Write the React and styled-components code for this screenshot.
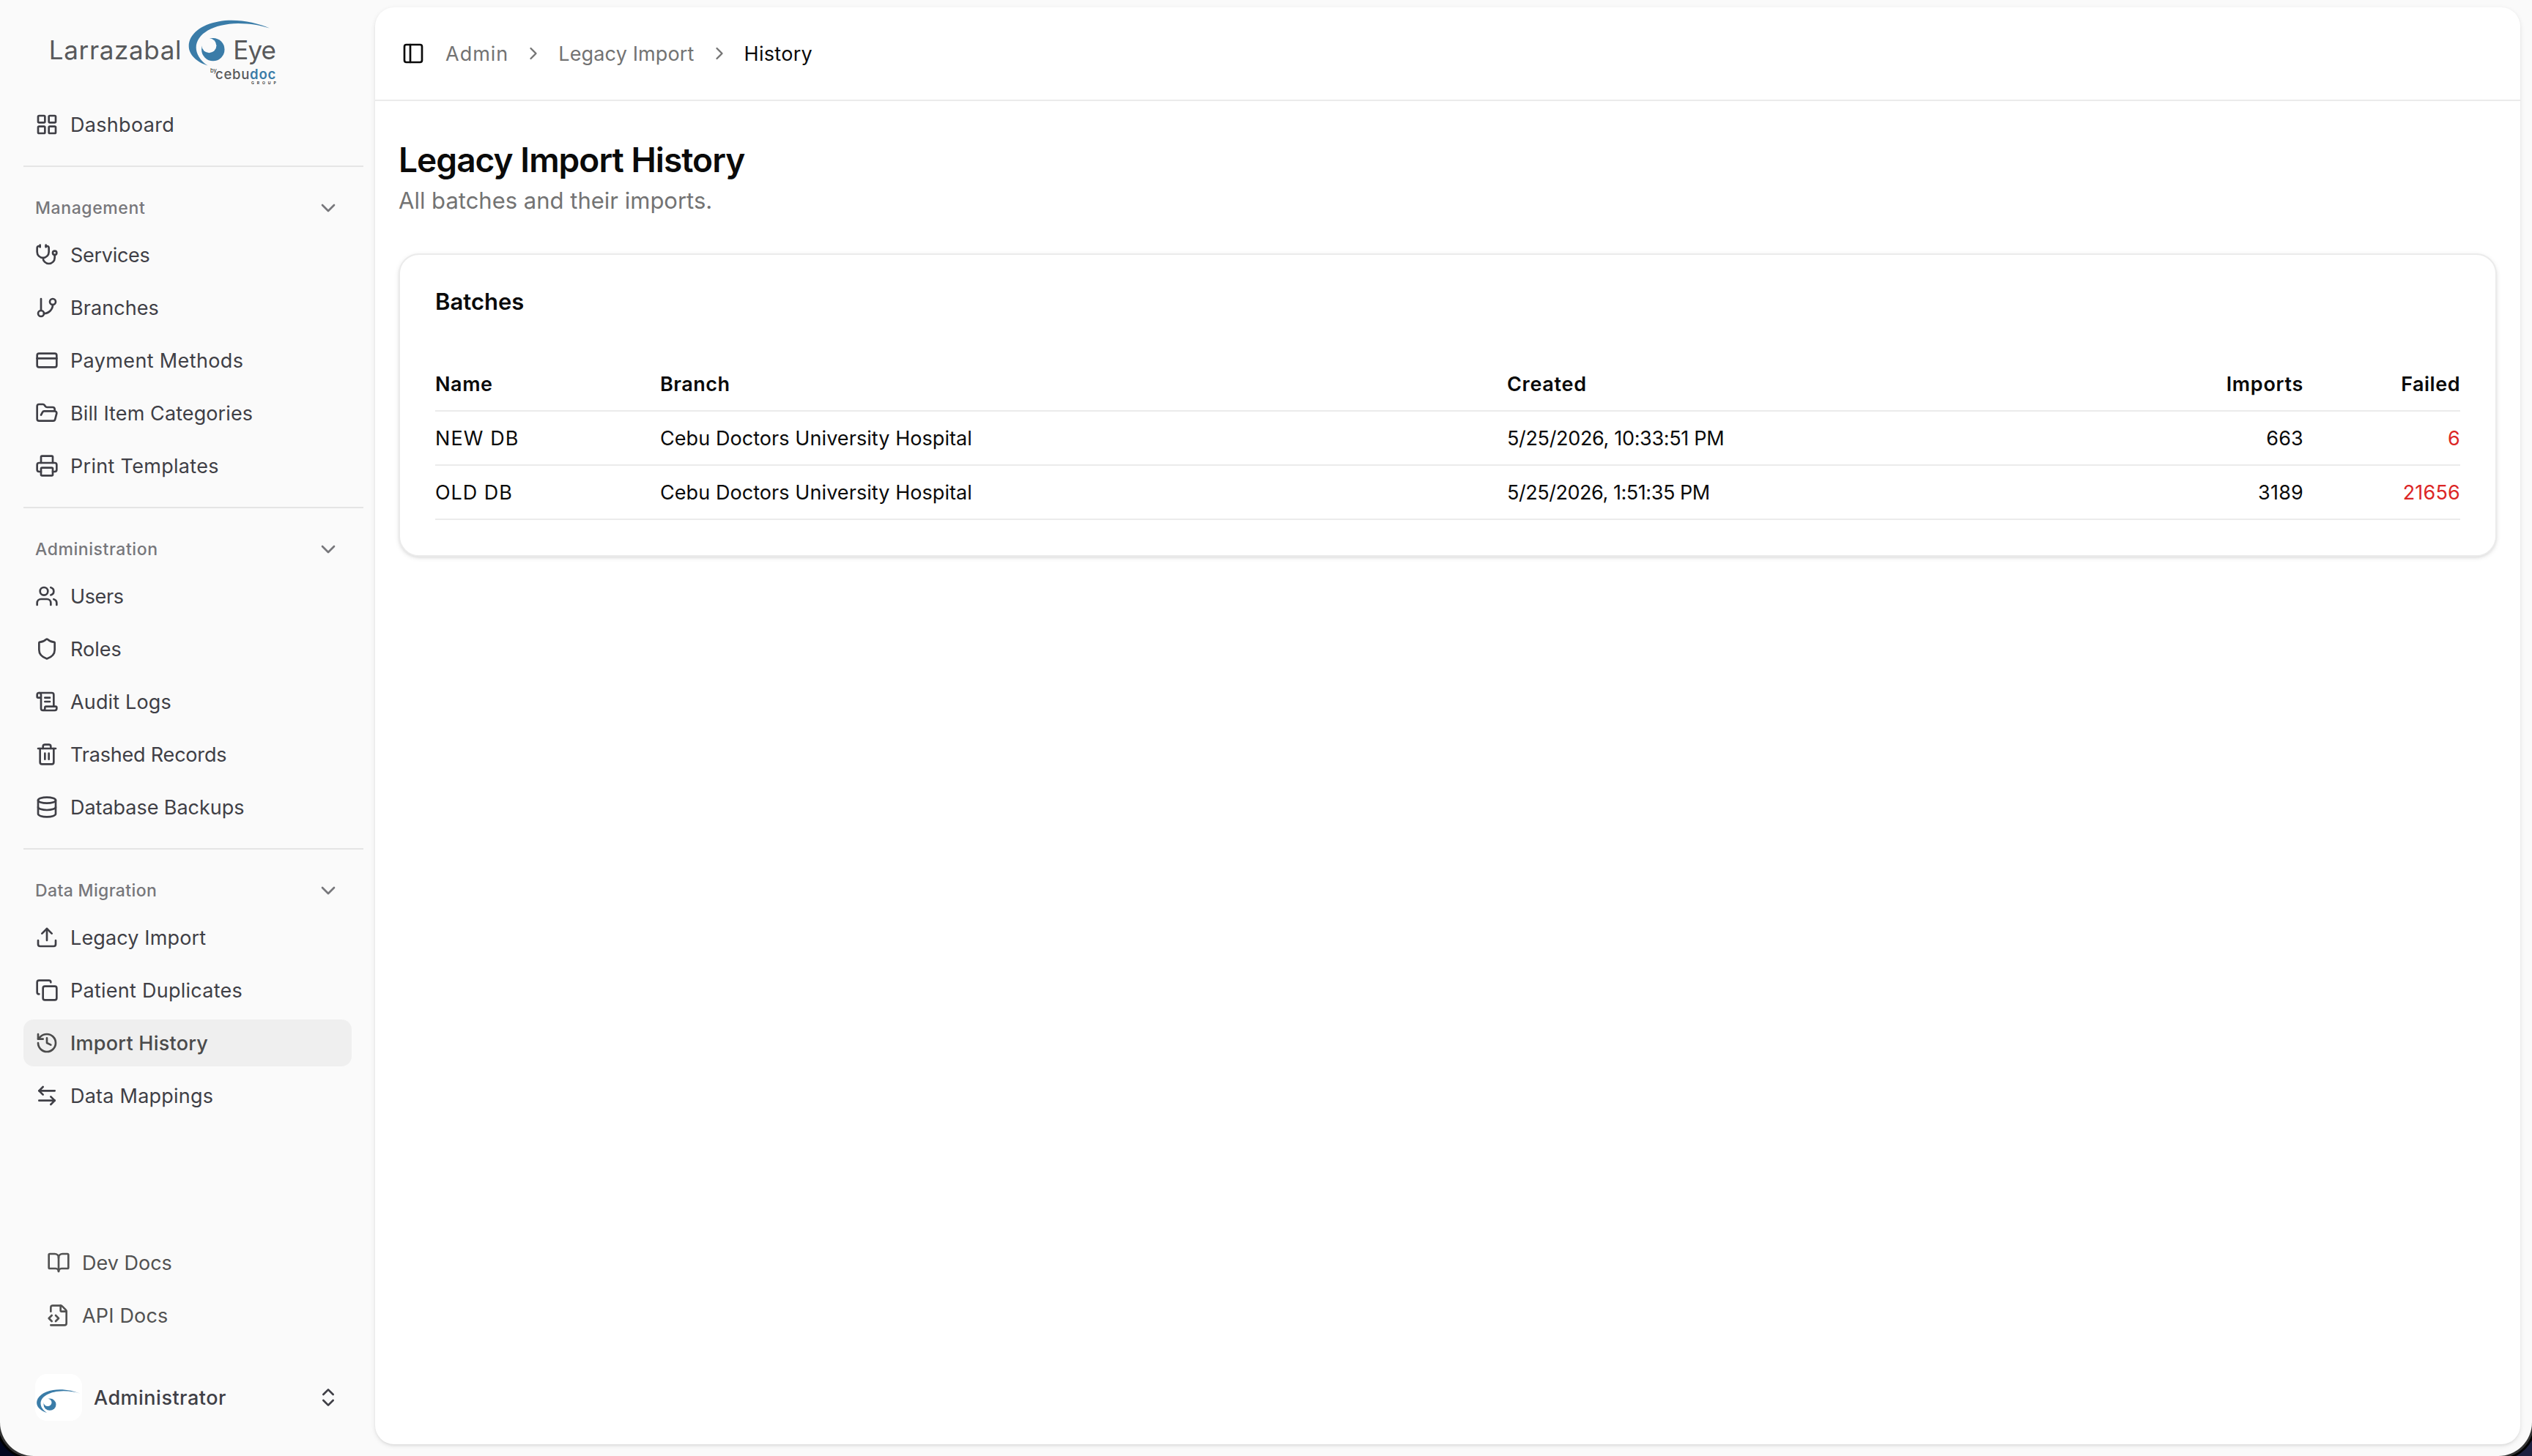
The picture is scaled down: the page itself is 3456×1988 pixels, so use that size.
import React from "react";
import styled, { createGlobalStyle } from "styled-components";
import {
  ArrowLeftRight,
  BookOpen,
  ChevronDown,
  ChevronRight,
  ChevronsUpDown,
  Copy,
  CreditCard,
  Database,
  FolderOpen,
  History,
  LayoutGrid,
  PanelLeft,
  Printer,
  ScrollText,
  Shield,
  Stethoscope,
  Trash2,
  Upload,
  Users,
} from "lucide-react";

const color = {
  canvas: "#fafafa",
  surface: "#ffffff",
  text: "#0a0a0a",
  sidebarText: "#3f3f46",
  muted: "#737373",
  label: "#77777b",
  border: "#ebebeb",
  separator: "#e5e5e5",
  active: "#efefef",
  brand: "#3a7ca8",
  danger: "#dc2626",
};

const GlobalStyle = createGlobalStyle`
  * { box-sizing: border-box; }
  body {
    margin: 0;
    font-family: Inter, "Liberation Sans", sans-serif;
    font-size: 27px;
    color: ${color.text};
    background: linear-gradient(90deg, #01061f 50%, #1d2140 50%);
    overflow: hidden;
  }
  svg { flex-shrink: 0; display: block; }
`;

const Window = styled.div`
  display: flex;
  height: 1988px;
  background: ${color.canvas};
  border-radius: 0 0 46px 46px;
  box-shadow: 0 0 0 3px #333333, 0 0 0 6px #000000;
`;

const Sidebar = styled.aside`
  display: flex;
  flex-direction: column;
  width: 512px;
  padding-bottom: 32px;
  color: ${color.sidebarText};
`;

const Brand = styled.header`
  height: 138px;
  padding: 20px 0 0 64px;
`;

const NavGroup = styled.section`
  margin-left: 32px;
  padding-bottom: 24px;
  border-bottom: ${(p) => (p.$last ? "none" : `2px solid ${color.separator}`)};
  width: 464px;
`;

const GroupLabel = styled.div`
  display: flex;
  align-items: center;
  justify-content: space-between;
  width: 448px;
  height: 64px;
  margin-top: 24px;
  padding: 0 16px;
  font-size: 23px;
  font-weight: 500;
  color: ${color.label};
`;

const NavList = styled.nav`
  display: flex;
  flex-direction: column;
  gap: 8px;
  width: 448px;
`;

const NavItem = styled.a`
  display: flex;
  align-items: center;
  gap: 16px;
  height: 64px;
  padding: 0 16px;
  border-radius: 14px;
  white-space: nowrap;
  font-weight: ${(p) => (p.$active ? 500 : 400)};
  color: ${(p) => (p.$active ? "#4b4b4b" : "inherit")};
  background: ${(p) => (p.$active ? color.active : "transparent")};
`;

const Label = styled.span`
  white-space: nowrap;
  letter-spacing: ${(p) => p.$track || 0}px;
`;

const SidebarFooter = styled.footer`
  display: flex;
  flex-direction: column;
  gap: 32px;
  margin-top: auto;
`;

const DocLinks = styled(NavList)`
  padding-left: 0;
  margin-left: 48px;
  width: 416px;
  color: #525252;
`;

const UserButton = styled.button`
  display: flex;
  align-items: center;
  gap: 16px;
  width: 448px;
  height: 96px;
  margin-left: 32px;
  padding: 0 16px;
  border: 0;
  background: none;
  font: 500 27px Inter, "Liberation Sans", sans-serif;
  color: ${color.sidebarText};

  & > svg { margin-left: auto; }
`;

const Avatar = styled.span`
  display: flex;
  align-items: center;
  width: 64px;
  height: 64px;
  padding: 9px 2px 0;
  border-radius: 16px;
  background: ${color.surface};
`;

const Main = styled.main`
  flex: 1;
  margin: 10px 16px 16px 0;
  border-radius: 26px;
  background: ${color.surface};
  box-shadow: 0 2px 6px rgba(0, 0, 0, 0.1), 0 2px 4px -2px rgba(0, 0, 0, 0.1);
`;

const TopBar = styled.header`
  display: flex;
  align-items: center;
  gap: 28px;
  height: 128px;
  padding-left: 36px;
  border-bottom: 2px solid ${color.border};
`;

const Breadcrumb = styled.nav`
  display: flex;
  align-items: center;
  gap: 20px;
  color: ${color.muted};
`;

const Crumb = styled(Label)`
  color: ${(p) => (p.$current ? color.text : "inherit")};
`;

const Content = styled.div`
  padding: 48px 32px;
`;

const Title = styled.h1`
  margin: 0;
  font-size: 46px;
  line-height: 64px;
  font-weight: 600;
  letter-spacing: -0.95px;
`;

const Subtitle = styled.p`
  margin: 0 0 48px;
  font-size: 31px;
  line-height: 48px;
  color: ${color.muted};
`;

const Card = styled.section`
  padding: 48px;
  border: 2px solid ${color.border};
  border-radius: 28px;
  background: ${color.surface};
  box-shadow: 0 2px 6px rgba(0, 0, 0, 0.1), 0 2px 4px -2px rgba(0, 0, 0, 0.1);
`;

const CardTitle = styled.h2`
  margin: 0 0 60px;
  font-size: 31px;
  line-height: 32px;
  font-weight: 600;
`;

const Row = styled.div`
  display: grid;
  grid-template-columns: 307px 1156px 1fr 400px 214px;
  align-items: center;
  height: 74px;
  border-bottom: 2px solid ${color.border};
  font-weight: ${(p) => (p.$head ? 600 : 400)};
`;

const Cell = styled(Label)`
  text-align: ${(p) => (p.$right ? "right" : "left")};
  color: ${(p) => (p.$danger ? color.danger : "inherit")};
`;

function EyeMark({ hole }) {
  return (
    <g>
      <path
        fill={color.brand}
        d="M368 38.6C350 30.5 322 25 299 29.2C274 33.5 257.7 47 257.7 63C257.7 75 269 85 283.5 89.5C273 83 267.7 73 267.7 65C268 46 291 32.6 325 32C342 32 356 34.8 368 38.6Z"
      />
      <circle cx="290.8" cy="67.6" r="15.7" fill={color.brand} />
      <circle cx="285.4" cy="62.2" r="10" fill={hole} />
    </g>
  );
}

const Wordmark = styled.text`
  font-family: Inter, "Liberation Sans", sans-serif;
  font-size: ${(p) => p.$size}px;
  font-weight: ${(p) => p.$weight || 400};
  letter-spacing: ${(p) => p.$track || 0}px;
  fill: ${(p) => p.$fill || "#58595b"};
`;

function Logo() {
  return (
    <svg width="330" height="100" viewBox="64 20 330 100">
      <Wordmark x="66.8" y="81" $size={35} $track={0.65}>Larrazabal</Wordmark>
      <EyeMark hole={color.canvas} />
      <Wordmark x="318.2" y="81" $size={35} $track={-0.8}>Eye</Wordmark>
      <Wordmark x="287" y="99" $size={7.5} $fill="#222222">by</Wordmark>
      <Wordmark x="294" y="107.8" $size={18.5} $weight={500} $track={0.75}>
        cebu<tspan fill={color.brand} fontWeight="600">doc</tspan>
      </Wordmark>
      <Wordmark x="343" y="114.5" $size={5} $weight={600} $track={4} $fill="#222222">GROUP</Wordmark>
    </svg>
  );
}

function StrokeIcon({ size = 24, children }) {
  return (
    <svg
      width={size}
      height={size}
      viewBox="0 0 24 24"
      fill="none"
      stroke="currentColor"
      strokeWidth="2"
      strokeLinecap="round"
      strokeLinejoin="round"
    >
      {children}
    </svg>
  );
}

function BranchIcon({ size }) {
  return (
    <StrokeIcon size={size}>
      <path d="M6 3v12" />
      <circle cx="18" cy="6" r="3" />
      <circle cx="6" cy="18" r="3" />
      <path d="M18 9a9 9 0 0 1-9 9" />
    </StrokeIcon>
  );
}

function FileCodeIcon({ size }) {
  return (
    <StrokeIcon size={size}>
      <path d="M4 22h14a2 2 0 0 0 2-2V8a2.4 2.4 0 0 0-.706-1.706l-3.588-3.588A2.4 2.4 0 0 0 14 2H6a2 2 0 0 0-2 2v4" />
      <path d="M14 2v5a1 1 0 0 0 1 1h5" />
      <path d="m5 12-3 3 3 3" />
      <path d="m9 18 3-3-3-3" />
    </StrokeIcon>
  );
}

const groups = [
  {
    items: [{ label: "Dashboard", icon: LayoutGrid, track: 0.31 }],
  },
  {
    label: "Management",
    track: 0.6,
    items: [
      { label: "Services", icon: Stethoscope, track: -0.29 },
      { label: "Branches", icon: BranchIcon, track: 0.07 },
      { label: "Payment Methods", icon: CreditCard, track: 0.36 },
      { label: "Bill Item Categories", icon: FolderOpen, track: 0.1 },
      { label: "Print Templates", icon: Printer, track: 0.3 },
    ],
  },
  {
    label: "Administration",
    track: 0.57,
    items: [
      { label: "Users", icon: Users, track: -0.4 },
      { label: "Roles", icon: Shield },
      { label: "Audit Logs", icon: ScrollText, track: 0.15 },
      { label: "Trashed Records", icon: Trash2, track: -0.19 },
      { label: "Database Backups", icon: Database, track: -0.05 },
    ],
  },
  {
    label: "Data Migration",
    track: 0.36,
    items: [
      { label: "Legacy Import", icon: Upload, track: 0.14 },
      { label: "Patient Duplicates", icon: Copy, track: 0.26 },
      { label: "Import History", icon: History, track: 0.24, active: true },
      { label: "Data Mappings", icon: ArrowLeftRight, track: 0.23 },
    ],
  },
];

const docs = [
  { label: "Dev Docs", icon: BookOpen },
  { label: "API Docs", icon: FileCodeIcon, track: 0.18 },
];

const batches = [
  {
    name: "NEW DB",
    nameTrack: 1.1,
    created: "5/25/2026, 10:33:51 PM",
    createdTrack: -0.33,
    imports: "663",
    failed: "6",
  },
  {
    name: "OLD DB",
    nameTrack: 0.95,
    created: "5/25/2026, 1:51:35 PM",
    createdTrack: -0.45,
    imports: "3189",
    failed: "21656",
  },
];

function NavItems({ items }) {
  return items.map(({ label, icon: Icon, track, active }) => (
    <NavItem key={label} $active={active}>
      <Icon size={32} />
      <Label $track={track}>{label}</Label>
    </NavItem>
  ));
}

export default function App() {
  return (
    <>
      <GlobalStyle />
      <Window>
        <Sidebar>
          <Brand>
            <Logo />
          </Brand>
          {groups.map((group, i) => (
            <NavGroup key={i} $last={i === groups.length - 1}>
              {group.label && (
                <GroupLabel>
                  <Label $track={group.track}>{group.label}</Label>
                  <ChevronDown size={32} />
                </GroupLabel>
              )}
              <NavList>
                <NavItems items={group.items} />
              </NavList>
            </NavGroup>
          ))}
          <SidebarFooter>
            <DocLinks>
              <NavItems items={docs} />
            </DocLinks>
            <UserButton>
              <Avatar>
                <svg width="60" height="32" viewBox="257.5 27.5 111 62" preserveAspectRatio="none">
                  <EyeMark hole={color.surface} />
                </svg>
              </Avatar>
              <Label $track={0.49}>Administrator</Label>
              <ChevronsUpDown size={32} />
            </UserButton>
          </SidebarFooter>
        </Sidebar>

        <Main>
          <TopBar>
            <PanelLeft size={32} />
            <Breadcrumb>
              <Crumb $track={1}>Admin</Crumb>
              <ChevronRight size={28} />
              <Crumb $track={0.14}>Legacy Import</Crumb>
              <ChevronRight size={28} />
              <Crumb $track={0.3} $current>History</Crumb>
            </Breadcrumb>
          </TopBar>
          <Content>
            <Title>Legacy Import History</Title>
            <Subtitle>All batches and their imports.</Subtitle>
            <Card>
              <CardTitle>Batches</CardTitle>
              <Row $head>
                <Cell $track={0.6}>Name</Cell>
                <Cell $track={0.5}>Branch</Cell>
                <Cell $track={0.7}>Created</Cell>
                <Cell $track={0.7} $right>Imports</Cell>
                <Cell $track={0.5} $right>Failed</Cell>
              </Row>
              {batches.map((batch) => (
                <Row key={batch.name}>
                  <Cell $track={batch.nameTrack}>{batch.name}</Cell>
                  <Cell $track={0.07}>Cebu Doctors University Hospital</Cell>
                  <Cell $track={batch.createdTrack}>{batch.created}</Cell>
                  <Cell $track={0.2} $right>{batch.imports}</Cell>
                  <Cell $track={0.2} $right $danger>{batch.failed}</Cell>
                </Row>
              ))}
            </Card>
          </Content>
        </Main>
      </Window>
    </>
  );
}
